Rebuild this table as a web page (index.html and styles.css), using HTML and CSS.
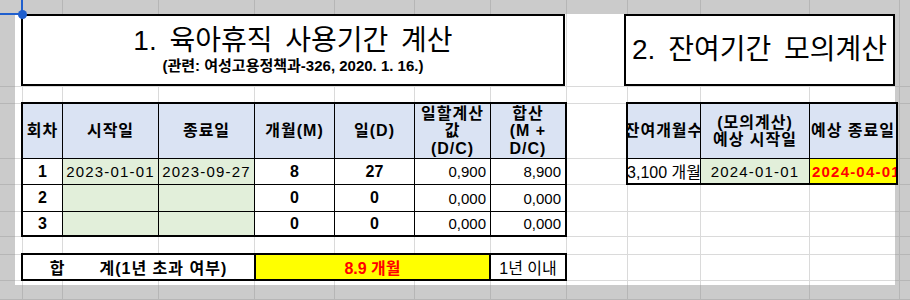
FILE: index.html
```html
<!DOCTYPE html>
<html>
<head>
    <meta charset="utf-8">
    <title>육아휴직 사용기간 계산</title>
    <link rel="stylesheet" href="styles.css">
</head>
<body>
    <div class="sheet">
        <!-- active cell handle -->
        <div class="cursor">
            <span class="cursor-v"></span>
            <span class="cursor-h"></span>
            <span class="cursor-dot"></span>
        </div>

        <div class="page">
            <div class="titles">
                <div class="title-box main">
                    <h1>1. 육아휴직 사용기간 계산</h1>
                    <p>(관련: 여성고용정책과-326, 2020. 1. 16.)</p>
                </div>
                <div class="title-box side">
                    <h1>2. 잔여기간 모의계산</h1>
                </div>
            </div>

            <div class="tables">
                <div class="grid usage">
                    <div class="c head">회차</div>
                    <div class="c head">시작일</div>
                    <div class="c head">종료일</div>
                    <div class="c head">개월(M)</div>
                    <div class="c head">일(D)</div>
                    <div class="c head">일할계산<br>값<br>(D/C)</div>
                    <div class="c head">합산<br>(M +<br>D/C)</div>

                    <div class="c b">1</div>
                    <div class="c input date">2023-01-01</div>
                    <div class="c input date">2023-09-27</div>
                    <div class="c b">8</div>
                    <div class="c b">27</div>
                    <div class="c num">0,900</div>
                    <div class="c num">8,900</div>

                    <div class="c b">2</div>
                    <div class="c input"></div>
                    <div class="c input"></div>
                    <div class="c b">0</div>
                    <div class="c b">0</div>
                    <div class="c num">0,000</div>
                    <div class="c num">0,000</div>

                    <div class="c b">3</div>
                    <div class="c input"></div>
                    <div class="c input"></div>
                    <div class="c b">0</div>
                    <div class="c b">0</div>
                    <div class="c num">0,000</div>
                    <div class="c num">0,000</div>
                </div>

                <div class="grid sim">
                    <div class="c head">잔여개월수</div>
                    <div class="c head">(모의계산)<br>예상 시작일</div>
                    <div class="c head">예상 종료일</div>

                    <div class="c">3,100 개월</div>
                    <div class="c input date">2024-01-01</div>
                    <div class="c hl date left">2024-04-01</div>
                </div>
            </div>

            <div class="grid total">
                <div class="c b label">합　　계(1년 초과 여부)</div>
                <div class="c hl">8.9 개월</div>
                <div class="c">1년 이내</div>
            </div>
        </div>
    </div>
</body>
</html>
```

FILE: styles.css
```css
body {
    margin: 0;
    font-family: "Liberation Sans", "Noto Sans CJK KR", sans-serif;
    font-size: 16px;
    color: #000;
}

/* gray area outside the print range, with darker gridlines */
.sheet {
    --g: linear-gradient(#b6b6b6, #b6b6b6);
    position: relative;
    width: 910px;
    height: 300px;
    box-sizing: border-box;
    padding: 14px 0 0 15px;
    overflow: hidden;
    background:
        var(--g) 22px 0 / 1px 100% no-repeat,
        var(--g) 62px 0 / 1px 100% no-repeat,
        var(--g) 158px 0 / 1px 100% no-repeat,
        var(--g) 254px 0 / 1px 100% no-repeat,
        var(--g) 334px 0 / 1px 100% no-repeat,
        var(--g) 414px 0 / 1px 100% no-repeat,
        var(--g) 490px 0 / 1px 100% no-repeat,
        var(--g) 566px 0 / 1px 100% no-repeat,
        var(--g) 627px 0 / 1px 100% no-repeat,
        var(--g) 700px 0 / 1px 100% no-repeat,
        var(--g) 809px 0 / 1px 100% no-repeat,
        var(--g) 899px 0 / 1px 100% no-repeat,
        var(--g) 0 86px / 100% 1px no-repeat,
        var(--g) 0 103px / 100% 1px no-repeat,
        var(--g) 0 158px / 100% 1px no-repeat,
        var(--g) 0 184px / 100% 1px no-repeat,
        var(--g) 0 211px / 100% 1px no-repeat,
        var(--g) 0 236px / 100% 1px no-repeat,
        var(--g) 0 254px / 100% 1px no-repeat,
        var(--g) 0 280px / 100% 1px no-repeat,
        var(--g) 0 299px / 100% 1px no-repeat,
        #cbcbcb;
}

.cursor span {
    position: absolute;
    background-color: #1f5fce;
}
.cursor-v {
    left: 21px;
    top: 0;
    width: 2px;
    height: 14px;
}
.cursor-h {
    left: 0;
    top: 13px;
    width: 21px;
    height: 2px;
}
.cursor-dot {
    left: 18px;
    top: 10px;
    width: 9px;
    height: 9px;
    border-radius: 50%;
}

/* white print range with light gridlines */
.page {
    --g: linear-gradient(#dadada, #dadada);
    width: 880px;
    height: 271px;
    box-sizing: border-box;
    padding-left: 6px;
    background:
        var(--g) 7px 0 / 1px 100% no-repeat,
        var(--g) 47px 0 / 1px 100% no-repeat,
        var(--g) 143px 0 / 1px 100% no-repeat,
        var(--g) 239px 0 / 1px 100% no-repeat,
        var(--g) 319px 0 / 1px 100% no-repeat,
        var(--g) 399px 0 / 1px 100% no-repeat,
        var(--g) 475px 0 / 1px 100% no-repeat,
        var(--g) 551px 0 / 1px 100% no-repeat,
        var(--g) 612px 0 / 1px 100% no-repeat,
        var(--g) 685px 0 / 1px 100% no-repeat,
        var(--g) 794px 0 / 1px 100% no-repeat,
        var(--g) 0 72px / 100% 1px no-repeat,
        var(--g) 0 89px / 100% 1px no-repeat,
        var(--g) 0 144px / 100% 1px no-repeat,
        var(--g) 0 170px / 100% 1px no-repeat,
        var(--g) 0 197px / 100% 1px no-repeat,
        var(--g) 0 222px / 100% 1px no-repeat,
        var(--g) 0 240px / 100% 1px no-repeat,
        var(--g) 0 266px / 100% 1px no-repeat,
        #fff;
}

.titles, .tables {
    display: flex;
    gap: 59px;
    align-items: flex-start;
}
.tables {
    margin-top: 16px;
}

.title-box {
    height: 72px;
    box-sizing: border-box;
    border: 2px solid #000;
    background-color: #fff;
    display: flex;
    flex-direction: column;
    align-items: center;
    justify-content: center;
}
.title-box.main {
    width: 546px;
    gap: 1px;
}
.title-box.side {
    width: 272px;
}
.title-box h1 {
    margin: 0;
    font-size: 28px;
    font-weight: normal;
    line-height: 30px;
    word-spacing: 5px;
    white-space: nowrap;
}
.title-box p {
    margin: 0;
    font-size: 15px;
    font-weight: bold;
    line-height: 18px;
}

/* cell grids: black background shows through the gaps as borders */
.grid {
    display: grid;
    gap: 1px;
    box-sizing: border-box;
    border: 2px solid #000;
    background-color: #000;
}
.usage {
    width: 546px;
    grid-template-columns: 39px 95px 95px 79px 79px 75px 74px;
    grid-template-rows: 54px 25px 26px 23px;
}
.sim {
    width: 272px;
    grid-template-columns: 72px 108px 86px;
    grid-template-rows: 54px 24px;
}
.total {
    width: 546px;
    margin-top: 16px;
    gap: 2px;
    grid-template-columns: 231px 233px 74px;
    grid-template-rows: 24px;
}

.c {
    background-color: #fff;
    display: flex;
    align-items: center;
    justify-content: center;
    overflow: hidden;
    white-space: nowrap;
}
.head {
    background-color: #dae3f3;
    font-weight: bold;
    text-align: center;
    line-height: 17.5px;
    letter-spacing: 1px;
}
.b {
    font-weight: bold;
}
.label {
    letter-spacing: 1px;
}
.input {
    background-color: #e2efda;
}
.date {
    font-size: 15px;
    letter-spacing: 1.2px;
}
.num {
    font-size: 15px;
    justify-content: flex-end;
    padding-right: 4px;
}
.hl {
    background-color: #ffff00;
    color: #ff0000;
    font-weight: bold;
}
.left {
    justify-content: flex-start;
    padding-left: 2px;
}
```
